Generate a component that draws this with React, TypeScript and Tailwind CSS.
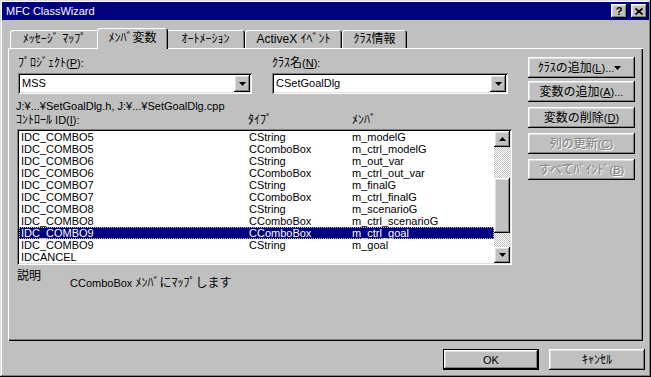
import React from "react";

// Win95 bevels
const raised =
  "shadow-[inset_-1px_-1px_#000,inset_1px_1px_#fff,inset_-2px_-2px_#808080,inset_2px_2px_#dfdfdf]";
const sunken =
  "shadow-[inset_1px_1px_#808080,inset_-1px_-1px_#fff,inset_2px_2px_#000,inset_-2px_-2px_#dfdfdf]";
const dither =
  "bg-[image:repeating-conic-gradient(#c0c0c0_0_25%,#fff_0_50%)] bg-[length:2px_2px]";

interface Member {
  id: string;
  type: string;
  name: string;
}

const members: Member[] = [
  { id: "IDC_COMBO5", type: "CString", name: "m_modelG" },
  { id: "IDC_COMBO5", type: "CComboBox", name: "m_ctrl_modelG" },
  { id: "IDC_COMBO6", type: "CString", name: "m_out_var" },
  { id: "IDC_COMBO6", type: "CComboBox", name: "m_ctrl_out_var" },
  { id: "IDC_COMBO7", type: "CString", name: "m_finalG" },
  { id: "IDC_COMBO7", type: "CComboBox", name: "m_ctrl_finalG" },
  { id: "IDC_COMBO8", type: "CString", name: "m_scenarioG" },
  { id: "IDC_COMBO8", type: "CComboBox", name: "m_ctrl_scenarioG" },
  { id: "IDC_COMBO9", type: "CComboBox", name: "m_ctrl_goal" },
  { id: "IDC_COMBO9", type: "CString", name: "m_goal" },
  { id: "IDCANCEL", type: "", name: "" },
];

const SELECTED = 8;

// Japanese text runs a touch larger, like MS UI Gothic
function J({ children }: { children: React.ReactNode }) {
  return <span className="text-[12px]">{children}</span>;
}

function Arrow({ dir = "down" }: { dir?: "up" | "down" }) {
  return (
    <svg width="7" height="4" viewBox="0 0 7 4">
      {dir === "down" ? (
        <polygon points="0,0 7,0 3.5,4" fill="#000" />
      ) : (
        <polygon points="0,4 7,4 3.5,0" fill="#000" />
      )}
    </svg>
  );
}

function Combo({ value, width }: { value: string; width: string }) {
  return (
    <div className={`flex h-[21px] bg-white p-[2px] ${sunken} ${width}`}>
      <div className="flex-1 pl-[2px] leading-[17px]">{value}</div>
      <div className={`flex h-[17px] w-[16px] items-center justify-center bg-[#c0c0c0] ${raised}`}>
        <Arrow />
      </div>
    </div>
  );
}

function SideButton({
  children,
  disabled,
  className = "",
}: {
  children: React.ReactNode;
  disabled?: boolean;
  className?: string;
}) {
  return (
    <div
      className={`flex h-[21px] w-[107px] items-center justify-center leading-[12px] ${raised} ${
        disabled ? "text-[#808080] [text-shadow:1px_1px_#fff]" : "text-black"
      } ${className}`}
    >
      {children}
    </div>
  );
}

function Tab({ label, width, active }: { label: string; width: string; active?: boolean }) {
  return (
    <div
      className={`flex items-start justify-center rounded-t-[3px] bg-[#c0c0c0] shadow-[inset_1px_1px_#fff,inset_-1px_0_#000,inset_-2px_0_#808080] ${width} ${
        active ? "relative z-10 -mx-[2px] -mb-[1px] h-[21px] pt-[4px]" : "h-[18px] pt-[3px]"
      }`}
    >
      <span className="text-[12px] leading-[12px]">{label}</span>
    </div>
  );
}

export default function App() {
  return (
    <div
      className={`flex h-[377px] w-[651px] flex-col bg-[#c0c0c0] p-[2px] text-[11px] text-black font-['Liberation_Sans','Noto_Sans_CJK_JP',sans-serif] shadow-[inset_-1px_-1px_#000,inset_1px_1px_#dfdfdf,inset_-2px_-2px_#808080,inset_2px_2px_#fff]`}
    >
      {/* Title bar */}
      <div className="flex h-[18px] items-center bg-[#000080] pl-[4px] pr-[2px] text-white">
        <span className="flex-1 leading-[12px]">MFC ClassWizard</span>
        <div className="flex gap-[4px]">
          <div className={`flex h-[14px] w-[16px] items-center justify-center bg-[#c0c0c0] text-[11px] font-bold leading-[12px] text-black ${raised}`}>
            ?
          </div>
          <div className={`flex h-[14px] w-[16px] items-center justify-center bg-[#c0c0c0] ${raised}`}>
            <svg width="8" height="7" viewBox="0 0 8 7">
              <path d="M0.5 0.5 L7.5 6.5 M7.5 0.5 L0.5 6.5" stroke="#000" strokeWidth="1.7" />
            </svg>
          </div>
        </div>
      </div>

      {/* Body */}
      <div className="flex flex-1 flex-col pl-[6px] pt-[8px]">
        {/* Tabs */}
        <div className="ml-[2px] flex h-[20px] items-end">
          <Tab label="ﾒｯｾｰｼﾞ ﾏｯﾌﾟ" width="w-[89px]" />
          <Tab label="ﾒﾝﾊﾞ変数" width="w-[71px]" active />
          <Tab label="ｵｰﾄﾒｰｼｮﾝ" width="w-[79px]" />
          <Tab label="ActiveX ｲﾍﾞﾝﾄ" width="w-[97px]" />
          <Tab label="ｸﾗｽ情報" width="w-[65px]" />
        </div>

        {/* Panel */}
        <div className="flex h-[293px] w-[635px] gap-[16px] bg-[#c0c0c0] pl-[9px] pt-[9px] shadow-[inset_1px_1px_#fff,inset_-1px_-1px_#000,inset_-2px_-2px_#808080]">
          {/* Left column */}
          <div className="flex w-[495px] flex-col">
            <div className="flex gap-[20px] pl-[1px]">
              <div className="flex flex-col gap-[3px]">
                <div className="h-[13px] leading-[13px]">
                  <J>ﾌﾟﾛｼﾞｪｸﾄ</J>(<u>P</u>):
                </div>
                <Combo value="MSS" width="w-[234px]" />
              </div>
              <div className="flex flex-col gap-[3px]">
                <div className="h-[13px] leading-[13px]">
                  <J>ｸﾗｽ名</J>(<u>N</u>):
                </div>
                <Combo value="CSetGoalDlg" width="w-[236px]" />
              </div>
            </div>

            <div className="mt-[6px] h-[12px] leading-[12px] -ml-[1px]">
              J:¥...¥SetGoalDlg.h, J:¥...¥SetGoalDlg.cpp
            </div>
            <div className="mt-[2px] flex h-[12px] leading-[12px] -ml-[1px]">
              <span className="w-[232px]">
                <J>ｺﾝﾄﾛｰﾙ</J> ID(<u>I</u>):
              </span>
              <span className="w-[104px]">
                <J>ﾀｲﾌﾟ</J>
              </span>
              <span>
                <J>ﾒﾝﾊﾞ</J>
              </span>
            </div>

            {/* List box */}
            <div className={`mt-[3px] flex h-[136px] w-[495px] bg-white p-[2px] ${sunken}`}>
              <div className="flex flex-1 flex-col overflow-hidden">
                {members.map((m, i) => (
                  <div
                    key={i}
                    className={`flex h-[12px] shrink-0 pl-[2px] leading-[12px] ${
                      i === SELECTED
                        ? "bg-[#000080] text-white outline-1 outline-dotted outline-[#c0c0c0] -outline-offset-1"
                        : ""
                    }`}
                  >
                    <span className="w-[228px]">{m.id}</span>
                    <span className="w-[103px]">{m.type}</span>
                    <span>{m.name}</span>
                  </div>
                ))}
              </div>
              {/* Scrollbar */}
              <div className="flex w-[16px] flex-col">
                <div className={`flex h-[16px] items-center justify-center bg-[#c0c0c0] ${raised}`}>
                  <Arrow dir="up" />
                </div>
                <div className={`h-[31px] ${dither}`} />
                <div className={`h-[55px] bg-[#c0c0c0] ${raised}`} />
                <div className={`h-[14px] ${dither}`} />
                <div className={`flex h-[16px] items-center justify-center bg-[#c0c0c0] ${raised}`}>
                  <Arrow />
                </div>
              </div>
            </div>

            {/* Description */}
            <div className="mt-[5px] flex">
              <span className="h-[12px] w-[53px] leading-[12px]">
                <J>説明</J>
              </span>
              <span className="mt-[7px] leading-[12px]">
                CComboBox <J>ﾒﾝﾊﾞにﾏｯﾌﾟします</J>
              </span>
            </div>
          </div>

          {/* Right column */}
          <div className="flex flex-col">
            <SideButton className="justify-between pl-[5px] pr-[9px]">
              <span>
                <J>ｸﾗｽの追加</J>(<u>L</u>)...
              </span>
              <Arrow />
            </SideButton>
            <SideButton className="mt-[3px]">
              <span>
                <J>変数の追加</J>(<u>A</u>)...
              </span>
            </SideButton>
            <SideButton className="mt-[5px]">
              <span>
                <J>変数の削除</J>(<u>D</u>)
              </span>
            </SideButton>
            <SideButton className="mt-[5px]" disabled>
              <span>
                <J>列の更新</J>(<u>C</u>)
              </span>
            </SideButton>
            <SideButton className="mt-[5px]" disabled>
              <span>
                <J>すべてﾊﾞｲﾝﾄﾞ</J>(<u>B</u>)
              </span>
            </SideButton>
          </div>
        </div>

        {/* Bottom buttons */}
        <div className="mt-[8px] flex justify-end gap-[10px] pr-[4px]">
          <div className="h-[21px] w-[96px] border border-black">
            <div className={`flex h-full items-center justify-center leading-[12px] ${raised}`}>OK</div>
          </div>
          <div className={`flex h-[21px] w-[96px] items-center justify-center leading-[12px] ${raised}`}>
            <J>ｷｬﾝｾﾙ</J>
          </div>
        </div>
      </div>
    </div>
  );
}
